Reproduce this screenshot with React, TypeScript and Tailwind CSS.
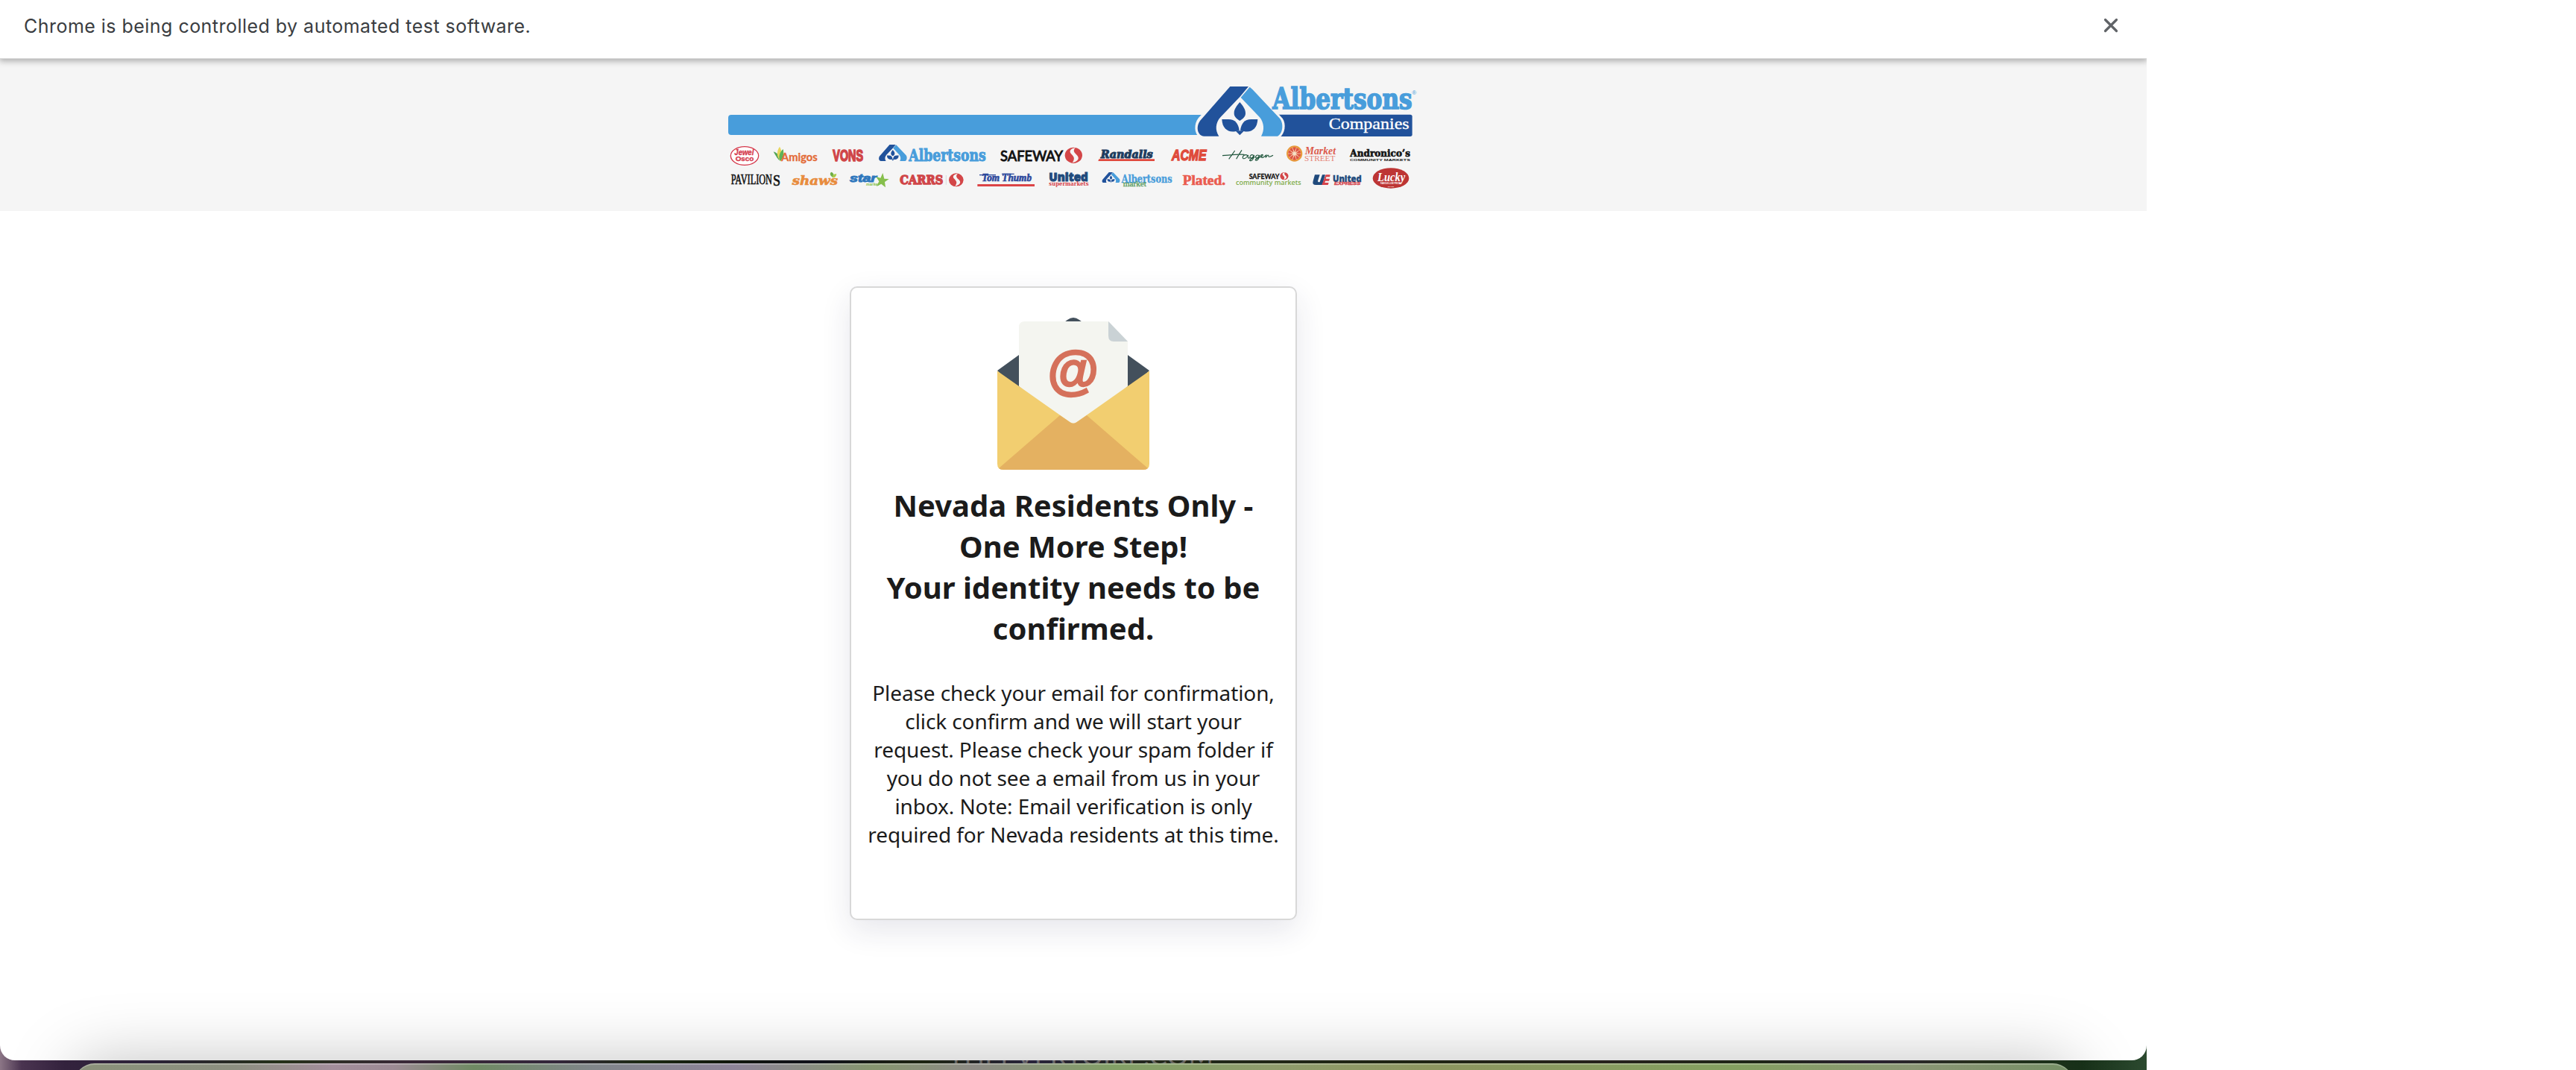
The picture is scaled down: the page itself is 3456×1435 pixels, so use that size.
import React from "react";

const SANS = "Liberation Sans, sans-serif";
const SERIF = "Liberation Serif, serif";
const SLAB = "DejaVu Serif, serif";

type WordProps = {
  x: number;
  y: number;
  w: number;
  size: number;
  fill: string;
  font?: string;
  weight?: number;
  italic?: boolean;
  stroke?: number;
  children: string;
};

function Word({ x, y, w, size, fill, font = SANS, weight = 700, italic = false, stroke = 0, children }: WordProps) {
  return (
    <text
      x={x}
      y={y}
      textLength={w}
      lengthAdjust="spacingAndGlyphs"
      fontSize={size}
      fontFamily={font}
      fontWeight={weight}
      fontStyle={italic ? "italic" : "normal"}
      fill={fill}
      stroke={stroke ? fill : "none"}
      strokeWidth={stroke}
    >
      {children}
    </text>
  );
}

/* Triangular "A" with the three-leaf sprout, drawn in a 350 x 200 box. */
function Emblem({ outline = true }: { outline?: boolean }) {
  const edge = outline ? "#f5f5f5" : "none";
  return (
    <g>
      <path
        d="M130 -4H222L346 128C362 150 356 190 334 205H12C-10 190 -12 150 8 126Z"
        fill={edge}
      />
      <path d="M135 0H209L176 40L96 124C76 146 74 176 90 200H30C4 198 -4 164 14 138Z" fill="#21529b" />
      <path d="M214 2L226 13L336 130C352 152 346 192 326 200H260C274 176 272 146 254 124L178 44Z" fill="#489ddb" />
      <path d="M174 63C186 78 197 90 197 108C197 122 186 130 174 138C162 130 151 122 151 108C151 90 162 78 174 63Z" fill="#21529b" />
      <path d="M102 132H128C156 132 168 150 172 176C134 190 104 176 102 132Z" fill="#21529b" />
      <path d="M246 132H220C192 132 180 150 176 176C214 190 244 176 246 132Z" fill="#21529b" />
      <path d="M156 178H192L174 196Z" fill="#21529b" />
    </g>
  );
}

/* Round "S" badge, 70 x 64. */
function SBadge({ fill = "#d34648" }: { fill?: string }) {
  return (
    <g>
      <ellipse cx="35" cy="32" rx="35" ry="32" fill={fill} />
      <path
        d="M42 2C22 4 16 16 25 26C35 37 43 44 30 62C54 56 60 44 49 32C39 22 30 14 42 2Z"
        fill="#f5f5f5"
      />
    </g>
  );
}

function BrandBanner() {
  return (
    <svg viewBox="970 100 940 160" className="block h-[160px] w-[940px]">
      <path d="M981 154H1620V181H981Q977 181 977 177V158Q977 154 981 154Z" fill="#489ddb" />

      <g transform="translate(960 90) scale(0.33333)">
        <ellipse cx="117" cy="357" rx="56" ry="37" fill="#fff" stroke="#d5394c" strokeWidth="4" />
        <Word x={76} y={354} w={78} size={30} fill="#d5394c" italic stroke={1}>Jewel</Word>
        <Word x={80} y={379} w={74} size={28} fill="#d5394c" stroke={1}>Osco</Word>

        <path d="M256 376C242 358 236 346 233 340C246 344 254 352 258 362Z" fill="#53a657" />
        <path d="M258 320C244 340 246 362 262 378C272 360 268 338 258 320Z" fill="#e9d65c" />
        <path d="M272 330C256 344 252 364 260 378C272 366 276 348 272 330Z" fill="#5fb35b" />
        <Word x={264} y={378} w={146} size={43} fill="#e36b38" font="Lato, sans-serif" stroke={1}>Amigos</Word>

        <Word x={472} y={377} w={122} size={64} fill="#d04548" stroke={5}>VONS</Word>

        <g transform="translate(656 312) scale(0.33)">
          <Emblem outline={false} />
        </g>
        <Word x={778} y={377} w={310} size={64} fill="#489ddb" font={SLAB} stroke={3}>Albertsons</Word>

        <Word x={62} y={472} w={166} size={58} fill="#111" font={SERIF} weight={400} stroke={2}>PAVILION</Word>
        <Word x={231} y={478} w={30} size={66} fill="#111" font={SERIF} weight={400} stroke={2}>S</Word>

        <Word x={308} y={474} w={184} size={50} fill="#e88c3d" font={SLAB} italic stroke={2}>shaws</Word>
        <path d="M472 444C458 434 460 426 466 422C476 426 478 434 472 444Z" fill="#6fae49" />
        <path d="M470 445C470 434 476 430 487 430C486 440 480 446 470 445Z" fill="#a9cb4a" />

        <Word x={540} y={463} w={108} size={42} fill="#2f78bd" italic stroke={3}>star</Word>
        <path d="M673 426L679 449L698 450L681 462L684 484L667 470L648 480L658 460L646 441L664 446Z" fill="#86bf4c" />
        <Word x={606} y={477} w={52} size={18} fill="#86bf4c" italic>market</Word>

        <Word x={742} y={470} w={174} size={48} fill="#d04548" font={SLAB} stroke={4}>CARRS</Word>
        <path d="M928 435V473" stroke="#ccc" strokeWidth="2" />
        <g transform="translate(939 427) scale(0.84)">
          <SBadge />
        </g>
      </g>

      <g transform="translate(1270 90) scale(0.33333)">
        <Word x={216} y={378} w={252} size={60} fill="#111" font="Lato, sans-serif" weight={400} stroke={3}>SAFEWAY</Word>
        <g transform="translate(476 323)">
          <SBadge />
        </g>
        <Word x={620} y={366} w={210} size={42} fill="#1d3c5e" font={SLAB} italic stroke={3}>Randalls</Word>
        <path d="M613 370H837V378H610Z" fill="#e0483d" />
        <Word x={906} y={376} w={140} size={58} fill="#df4b3b" italic stroke={4}>ACME</Word>

        <Word x={142} y={460} w={200} size={46} fill="#2b479b" font={SERIF} italic stroke={2}>Tom Thumb</Word>
        <path d="M132 434H198M222 430H272" stroke="#2b479b" strokeWidth="4" />
        <path d="M124 471H354V480H124Z" fill="#dc4447" />

        <Word x={412} y={458} w={157} size={49} fill="#204a7c" font="Open Sans, sans-serif" weight={800} stroke={3}>United</Word>
        <Word x={412} y={478} w={160} size={24} fill="#d5424a" font={SLAB}>supermarkets</Word>

        <g transform="translate(625 423) scale(0.21)">
          <Emblem outline={false} />
        </g>
        <Word x={704} y={466} w={204} size={43} fill="#489ddb" font={SLAB} stroke={1}>Albertsons</Word>
        <Word x={710} y={480} w={94} size={32} fill="#5c9c5f" font={SERIF} weight={400} stroke={1}>market</Word>
      </g>

      <g transform="translate(1580 90) scale(0.33333)">
        <path d="M340 191H936Q944 191 944 199V271Q944 279 936 279H340Z" fill="#21529b" />
        <g transform="translate(76 78)">
          <Emblem />
        </g>
        <Word x={382} y={168} w={562} size={116} fill="#489ddb" font={SLAB} stroke={5}>Albertsons</Word>
        <Word x={943} y={112} w={18} size={22} fill="#489ddb" weight={400}>®</Word>
        <Word x={608} y={249} w={324} size={66} fill="#fff" font={SERIF} weight={400} stroke={1}>Companies</Word>

        <path
          d="M180 356C210 354 240 350 268 352M206 370C214 358 224 346 230 336M236 370C242 358 250 346 258 334M282 356C270 348 256 360 264 368C272 370 280 360 284 354C280 364 284 370 292 364M306 356C296 348 286 360 294 366C302 366 306 358 308 354C306 366 300 378 292 377C284 376 300 366 310 362M328 356C318 350 310 360 316 366C324 366 328 358 330 354C328 366 322 378 314 375C308 372 324 366 332 362C342 360 346 352 340 352C332 354 334 366 342 364C350 362 352 356 356 354L354 364C360 354 366 350 366 360C370 362 376 360 384 355"
          fill="none"
          stroke="#23583f"
          strokeWidth="3.5"
        />

        <circle cx="470" cy="348" r="32" fill="#e89a3d" />
        <circle cx="470" cy="348" r="25" fill="#f6e3c6" />
        {[0, 36, 72, 108, 144, 180, 216, 252, 288, 324].map((a) => (
          <path key={a} d="M470 342L463 325Q470 319 477 325Z" fill="#de5540" transform={`rotate(${a} 470 348)`} />
        ))}
        <Word x={512} y={350} w={124} size={42} fill="#dc5b4c" font={SERIF} italic>Market</Word>
        <Word x={510} y={377} w={124} size={30} fill="#e58476" font={SERIF} weight={400}>STREET</Word>

        <Word x={694} y={361} w={242} size={40} fill="#141414" font={SLAB} stroke={2}>Andronico’s</Word>
        <Word x={693} y={377} w={243} size={13} fill="#141414">COMMUNITY MARKETS</Word>

        <Word x={20} y={475} w={172} size={56} fill="#ea5b4f" font={SERIF} stroke={2}>Plated.</Word>

        <Word x={287} y={450} w={122} size={30} fill="#111" font="Lato, sans-serif" stroke={1}>SAFEWAY</Word>
        <g transform="translate(412 423) scale(0.48)">
          <SBadge />
        </g>
        <Word x={234} y={475} w={263} size={27} fill="#7aa842" font="Noto Sans, sans-serif" weight={500}>community markets</Word>

        <path d="M552 433H572L564 458Q564 464 572 462L582 433H594L582 474H556Q540 474 545 458Z" fill="#204a7c" />
        <path d="M596 433H614L612 442H598L596 449H612L609 458H594L592 465H608L605 474H580Z" fill="#d5424a" />
        <Word x={624} y={461} w={116} size={37} fill="#204a7c" font="Open Sans, sans-serif" weight={800} stroke={1}>United</Word>
        <Word x={630} y={475} w={106} size={15} fill="#d5424a" italic stroke={1}>EXPRESS</Word>

        <ellipse cx="858" cy="447" rx="73" ry="41" fill="#bd3534" />
        <Word x={804} y={459} w={112} size={50} fill="#fff" font={SERIF} italic>Lucky</Word>
        <Word x={816} y={471} w={84} size={9} fill="#fff">FAMOUS LOW PRICES</Word>
        <Word x={846} y={482} w={24} size={6} fill="#fff">EST 1935</Word>
      </g>
    </svg>
  );
}

function EnvelopeIcon() {
  return (
    <svg viewBox="0 0 204 204" className="block size-[204px]">
      <path d="M0 71L94 3Q102 -3 110 3L204 71L175 100H29Z" fill="#43505c" />
      <path d="M29 13Q29 5 37 5H149L175 32V92L108 152H96L29 92Z" fill="#f4f5f0" />
      <path d="M149 5L175 32H156Q149 32 149 24Z" fill="#cad2d5" />
      <path d="M0 71.500L98 140.500Q102 143 106 140.500L204 71.500V196Q204 204 196 204H8Q0 204 0 196Z" fill="#f2ce70" />
      <path d="M2 202L84 131L98 140.500Q102 143 106 140.500L120 131L202 202Q200 204 196 204H8Q4 204 2 202Z" fill="#e4b161" />
      <text
        x="66.500"
        y="95"
        fontFamily={SANS}
        fontWeight="700"
        fontStyle="italic"
        fontSize="70"
        fill="#d5715b"
        stroke="#d5715b"
        strokeWidth="2.500"
      >
        @
      </text>
    </svg>
  );
}

export default function App() {
  return (
    <div className="h-[1435px] w-[3456px] overflow-hidden bg-white">
      <div className="relative h-[1435px] w-[2880px] overflow-hidden bg-[linear-gradient(90deg,#8c7686_0%,#4a3450_1%,#33223d_3%,#2c2238_7%,#243018_13%,#3a2838_19%,#33263a_26%,#1c2a12_30%,#10160c_34%,#10101a_38%,#1c2410_43%,#28233a_48%,#22281a_54%,#1e2412_65%,#26221c_75%,#1e2616_82%,#2a2030_87%,#26301c_92%,#173018_97%,#2c4a30_100%)]">
        <div className="absolute left-[1272px] top-[1395px] whitespace-nowrap font-['Lato'] text-[36px] leading-10 tracking-[0.2px] text-[#8a8684]/70">
          THEEVERTOIRE.COM
        </div>
        <div className="relative flex h-[1422px] flex-col overflow-hidden rounded-b-[20px] bg-white">
          <div className="relative z-10 flex h-[79px] shrink-0 items-start justify-between border-b border-[#d8d8d8] bg-white pl-[32px] pr-[38px] shadow-[0_2px_8px_1px_rgba(0,0,0,0.3)]">
            <span className="mt-[17px] whitespace-nowrap font-['Inter'] text-[25px] leading-9 tracking-[0.47px] text-[#3a3d41]">
              Chrome is being controlled by automated test software.
            </span>
            <svg viewBox="0 0 20 20" className="mt-6 size-5" fill="none" stroke="#606367" strokeWidth="3.2" strokeLinecap="round">
              <path d="M2.500 2.500L17.500 17.500M17.500 2.500L2.500 17.500" />
            </svg>
          </div>
          <header className="flex h-[204px] shrink-0 justify-center bg-[#f5f5f5] pt-[21px]">
            <BrandBanner />
          </header>
          <main className="mt-[101px] flex justify-center">
            <section className="flex h-[850px] w-[600px] flex-col items-center rounded-[10px] border-2 border-[#d8d8d8] bg-white pt-10 text-center font-['Noto_Sans'] text-[#1b1b1b] shadow-[0_14px_40px_rgba(40,40,80,0.11)]">
              <EnvelopeIcon />
              <h1 className="mt-5 whitespace-nowrap text-[40px] font-bold leading-[55px]">
                Nevada Residents Only -
                <br />
                One More Step!
                <br />
                Your identity needs to be
                <br />
                confirmed.
              </h1>
              <p className="mt-10 whitespace-nowrap text-[28px] leading-[38px] tracking-[-0.1px]">
                Please check your email for confirmation,
                <br />
                click confirm and we will start your
                <br />
                request. Please check your spam folder if
                <br />
                you do not see a email from us in your
                <br />
                inbox. Note: Email verification is only
                <br />
                required for Nevada residents at this time.
              </p>
            </section>
          </main>
          <div className="absolute left-[99px] top-[1426px] h-[200px] w-[2683px] rounded-[28px] shadow-[0_0_90px_rgba(0,0,0,0.26)]" />
        </div>
        <div className="absolute left-[99px] top-[1426px] h-[60px] w-[2683px] rounded-[28px] border-t-2 border-[#ffffff40] bg-[linear-gradient(90deg,#8a9179_0%,#8c8f80_8%,#a38d9b_13%,#9c8a94_16%,#6f8a63_20%,#80858a_26%,#8d8398_33%,#86966f_40%,#8d8a85_45%,#82a066_52%,#8f9c6c_60%,#8d965f_68%,#84a060_83%,#8a9674_92%,#758f65_100%)]" />
      </div>
    </div>
  );
}
